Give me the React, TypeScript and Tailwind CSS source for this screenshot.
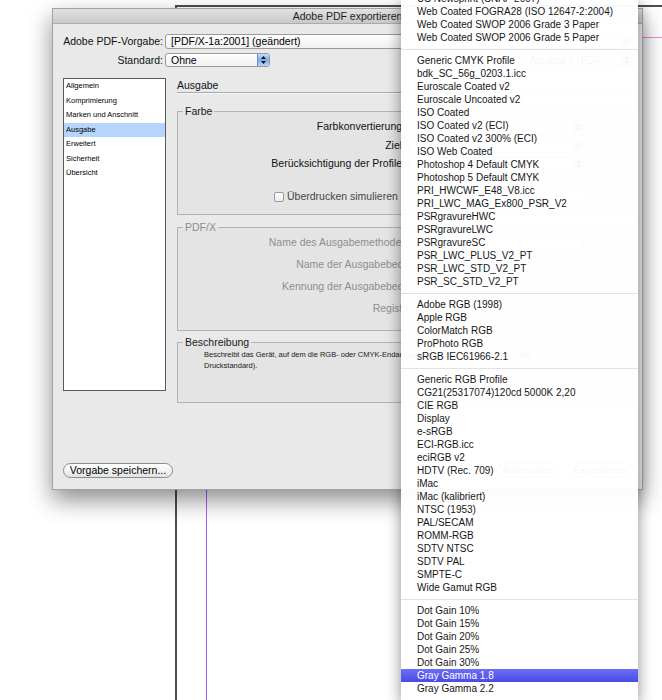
import React from 'react';

// null marks a separator line in the profile menu
const profiles: (string | null)[] = [
  'US Newsprint (SNAP 2007)',
  'Web Coated FOGRA28 (ISO 12647-2:2004)',
  'Web Coated SWOP 2006 Grade 3 Paper',
  'Web Coated SWOP 2006 Grade 5 Paper',
  null,
  'Generic CMYK Profile',
  'bdk_SC_56g_0203.1.icc',
  'Euroscale Coated v2',
  'Euroscale Uncoated v2',
  'ISO Coated',
  'ISO Coated v2 (ECI)',
  'ISO Coated v2 300% (ECI)',
  'ISO Web Coated',
  'Photoshop 4 Default CMYK',
  'Photoshop 5 Default CMYK',
  'PRI_HWCWF_E48_V8.icc',
  'PRI_LWC_MAG_Ex800_PSR_V2',
  'PSRgravureHWC',
  'PSRgravureLWC',
  'PSRgravureSC',
  'PSR_LWC_PLUS_V2_PT',
  'PSR_LWC_STD_V2_PT',
  'PSR_SC_STD_V2_PT',
  null,
  'Adobe RGB (1998)',
  'Apple RGB',
  'ColorMatch RGB',
  'ProPhoto RGB',
  'sRGB IEC61966-2.1',
  null,
  'Generic RGB Profile',
  'CG21(25317074)120cd 5000K 2,20',
  'CIE RGB',
  'Display',
  'e-sRGB',
  'ECI-RGB.icc',
  'eciRGB v2',
  'HDTV (Rec. 709)',
  'iMac',
  'iMac (kalibriert)',
  'NTSC (1953)',
  'PAL/SECAM',
  'ROMM-RGB',
  'SDTV NTSC',
  'SDTV PAL',
  'SMPTE-C',
  'Wide Gamut RGB',
  null,
  'Dot Gain 10%',
  'Dot Gain 15%',
  'Dot Gain 20%',
  'Dot Gain 25%',
  'Dot Gain 30%',
  'Gray Gamma 1.8',
  'Gray Gamma 2.2',
  null,
  'Lab Profile',
];

const highlighted = 'Gray Gamma 1.8';

const sections = [
  'Allgemein',
  'Komprimierung',
  'Marken und Anschnitt',
  'Ausgabe',
  'Erweitert',
  'Sicherheit',
  'Übersicht',
];

const colorLabels = ['Farbkonvertierung:', 'Ziel:', 'Berücksichtigung der Profile:'];

const pdfxRows = [
  'Name des Ausgabemethodenprofils:',
  'Name der Ausgabebedingung:',
  'Kennung der Ausgabebedingung:',
  'Registrierung:',
];

function Stepper() {
  return (
    <span className="flex h-full w-[12px] shrink-0 flex-col items-center justify-center gap-[2px] rounded-r-[3px] border-l border-[#6d8fc0] bg-gradient-to-b from-[#c6ddf8] via-[#78abee] to-[#b9d6f8]">
      <svg width="5" height="3" viewBox="0 0 5 3">
        <path d="M2.5 0L5 3H0z" fill="#111" />
      </svg>
      <svg width="5" height="3" viewBox="0 0 5 3">
        <path d="M0 0h5L2.5 3z" fill="#111" />
      </svg>
    </span>
  );
}

function PopUp({ value, className }: { value?: string; className: string }) {
  return (
    <div
      className={`flex items-center overflow-hidden rounded-[3px] border border-[#9a9a9a] bg-gradient-to-b from-white to-[#f0f0f0] ${className}`}
    >
      <span className="flex-1 truncate pl-[5px] text-[10.5px] leading-none text-black">{value}</span>
      <Stepper />
    </div>
  );
}

function PushButton({ label, className }: { label: string; className: string }) {
  return (
    <div
      className={`flex h-[15px] items-center justify-center rounded-full border border-[#8c8c8c] bg-gradient-to-b from-white via-[#f4f4f4] to-[#e2e2e2] text-[10.5px] leading-none text-black ${className}`}
    >
      {label}
    </div>
  );
}

function Group({
  title,
  muted,
  className,
  children,
}: {
  title: string;
  muted?: boolean;
  className: string;
  children: React.ReactNode;
}) {
  return (
    <fieldset className={`shrink-0 border border-[#b3b3b3] bg-[#e4e4e4] ${className}`}>
      <legend
        className={`ml-[5px] px-[2px] text-[10.5px] leading-[13px] ${muted ? 'text-[#8e8e8e]' : 'text-[#1a1a1a]'}`}
      >
        {title}
      </legend>
      {children}
    </fieldset>
  );
}

function ExportDialog() {
  return (
    <div className="absolute left-[52px] top-[8px] flex h-[482px] w-[591px] flex-col border border-[#a2a2a2] bg-[#e9e9e9] shadow-[0_10px_22px_rgba(0,0,0,0.45)]">
      <div className="flex h-[15px] shrink-0 items-center justify-center border-b border-[#ababab] bg-gradient-to-b from-[#e2e2e2] to-[#c9c9c9] text-[10.5px] leading-none text-[#1c1c1c]">
        Adobe PDF exportieren
      </div>

      <div className="flex flex-1 flex-col pl-[10px] pr-[9px] pt-[10px]">
        <div className="flex h-[15px] items-center">
          <span className="w-[100px] text-right text-[10.5px] leading-none text-[#111]">Adobe PDF-Vorgabe:</span>
          <PopUp value="[PDF/X-1a:2001] (geändert)" className="ml-[2px] h-[15px] flex-1" />
        </div>
        <div className="mt-[4px] flex h-[14px] items-center">
          <span className="w-[100px] text-right text-[10.5px] leading-none text-[#111]">Standard:</span>
          <PopUp value="Ohne" className="ml-[2px] h-[14px] w-[105px]" />
          <PopUp value="Acrobat 7 (PDF 1.6)" className="ml-auto h-[14px] w-[110px]" />
        </div>

        <div className="mt-[11px] flex h-[313px] shrink-0 gap-[11px]">
          <div className="h-[313px] w-[103px] shrink-0 border border-[#5a5a5a] bg-white">
            {sections.map((s) => (
              <div
                key={s}
                className={`h-[14.5px] pl-[2px] text-[7.5px] leading-[14.5px] text-black ${s === 'Ausgabe' ? 'bg-[#b6d5fd]' : ''}`}
              >
                {s}
              </div>
            ))}
          </div>

          <div className="flex flex-1 flex-col">
            <div className="mt-[1px] h-[14px] shrink-0 border-b border-[#a9a9a9] text-[10.5px] leading-[12px] text-[#111] shadow-[0_1px_0_#f7f7f7]">
              Ausgabe
            </div>

            <Group title="Farbe" className="mt-[12px] h-[110px]">
              <div className="grid grid-cols-[227px_176px] gap-x-[4px]">
                {colorLabels.map((label) => (
                  <React.Fragment key={label}>
                    <div className="flex h-[18.5px] items-center justify-end text-[10.5px] text-[#111]">{label}</div>
                    <div className="flex h-[18.5px] items-center">
                      <PopUp className="h-[15px] w-full" />
                    </div>
                  </React.Fragment>
                ))}
              </div>
              <div className="mt-[14.5px] flex h-[18.5px] items-center pl-[96px]">
                <span className="mr-[3px] h-[10px] w-[10px] rounded-[2px] border border-[#9a9a9a] bg-gradient-to-b from-white to-[#ececec]" />
                <span className="text-[10.5px] text-[#444]">Überdrucken simulieren</span>
                <div className="ml-[84px] h-[15px] w-[104px] rounded-full border border-[#8c8c8c] bg-gradient-to-b from-white to-[#e2e2e2]" />
              </div>
            </Group>

            <Group title="PDF/X" muted className="mt-[6px] h-[110px]">
              <div className="flex flex-col gap-[4px]">
                {pdfxRows.map((label, i) => (
                  <div key={label} className="flex h-[18px] items-center">
                    <span className="w-[260px] text-right text-[10.5px] text-[#8e8e8e]">{label}</span>
                    {i === 0 && <PopUp className="ml-[5px] h-[15px] w-[147px] opacity-50" />}
                  </div>
                ))}
              </div>
            </Group>

            <Group title="Beschreibung" className="mt-[5px] h-[67px]">
              <p className="pl-[26px] text-[7.5px] leading-[11px] text-[#1a1a1a]">
                Beschreibt das Gerät, auf dem die RGB- oder CMYK-Endausgabe erfolgen wird (z. B. Monitor oder
                <br />
                Druckstandard).
              </p>
            </Group>
          </div>
        </div>

        <div className="mt-[72px] flex items-center">
          <PushButton label="Vorgabe speichern..." className="w-[110px]" />
          <PushButton label="Abbrechen" className="ml-auto w-[60px]" />
          <PushButton label="Exportieren" className="ml-[10px] w-[66px]" />
        </div>
      </div>
    </div>
  );
}

function ProfileMenu() {
  return (
    <div className="absolute left-[401px] top-0 h-[700px] w-[237px] overflow-hidden bg-white/[0.965] shadow-[0_4px_14px_rgba(0,0,0,0.45)]">
      <div className="mt-[-8px]">
        {profiles.map((p, i) =>
          p === null ? (
            <div key={i} className="flex h-[10px] items-center">
              <div className="h-px w-full bg-[#e2e2e2]" />
            </div>
          ) : (
            <div
              key={i}
              className={`h-[13px] whitespace-nowrap pl-[16px] text-[10px] leading-[13px] ${
                p === highlighted ? 'bg-gradient-to-b from-[#6c6ef6] to-[#4a4ae6] text-white' : 'text-[#161616]'
              }`}
            >
              {p}
            </div>
          ),
        )}
      </div>
    </div>
  );
}

export default function App() {
  return (
    <div className="relative h-[700px] w-[662px] overflow-hidden bg-white font-['Liberation_Sans',Arial,sans-serif]">
      {/* document page edge with margin guides */}
      <div className="absolute left-[175px] top-[5px] h-[695px] w-[487px] border-l-2 border-t-2 border-[#4e4e4e]">
        <div className="absolute left-[29px] right-0 top-[30px] h-px bg-[#ef85dc]" />
        <div className="absolute bottom-0 left-[29px] top-[30px] w-px bg-[#ad5cf8]" />
      </div>

      <ExportDialog />
      <ProfileMenu />
    </div>
  );
}
